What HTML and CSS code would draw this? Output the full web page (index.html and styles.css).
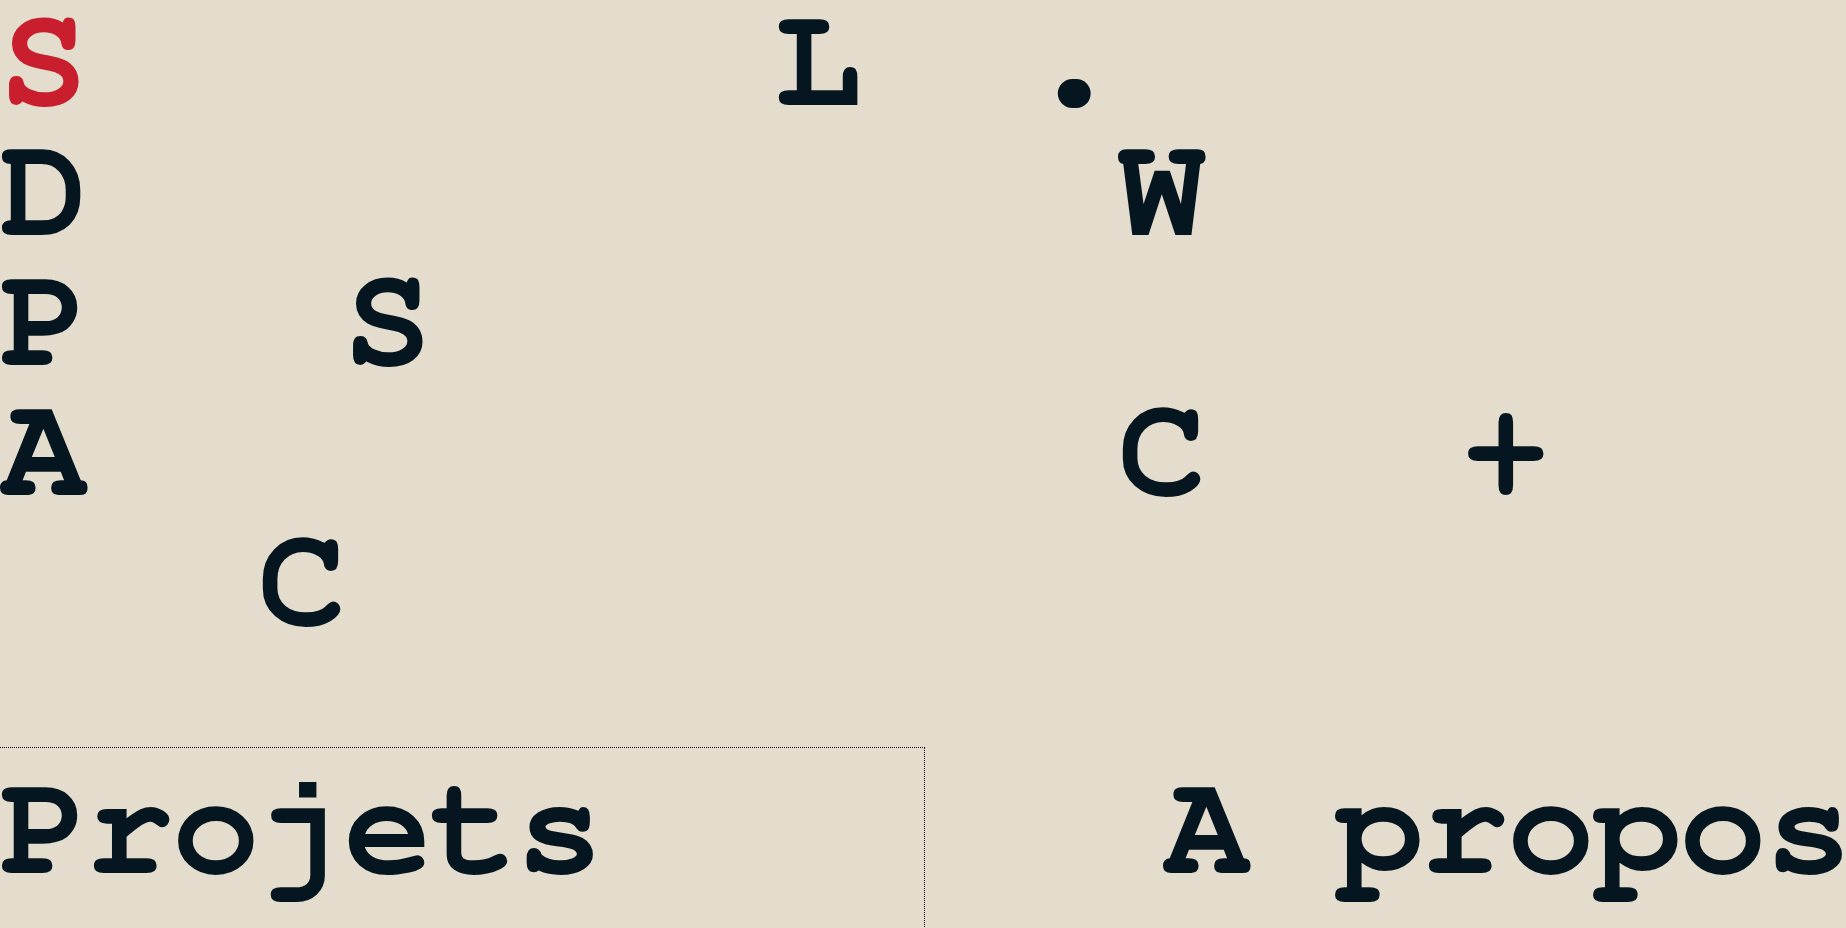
FILE: index.html
```html
<!DOCTYPE html>
<html lang="fr">
<head>
<meta charset="utf-8">
<title>S.L.D.</title>
<link rel="stylesheet" href="styles.css">
</head>
<body>
<main class="letters">
<div class="row"><span class="accent">S</span>        L  <span class="dot">.</span></div>
<div class="row">D            W</div>
<div class="row">P   S</div>
<div class="row">A            C   +</div>
<div class="row">   C</div>
</main>
<nav class="nav">
<a class="nav-link nav-link--focus" href="#projets">Projets</a>
<a class="nav-link nav-link--right" href="#apropos">A propos</a>
</nav>
</body>
</html>
```
FILE: styles.css
```css
html, body {
  margin: 0;
  padding: 0;
}
body {
  background: #e4ddcd;
  color: #061620;
  font-family: "FreeMono", "Courier New", monospace;
  font-weight: 700;
  font-size: 146px;
  letter-spacing: -1.6px;
  overflow: hidden;
  height: 928px;
}
.letters {
  display: flex;
  flex-direction: column;
  margin-top: -4px;
}
.row {
  white-space: pre;
  line-height: 130px;
  height: 130px;
}
.accent {
  color: #c81e2d;
}
.dot {
  display: inline-block;
  transform: scale(1.5);
  transform-origin: 50% 92px;
  position: relative;
  top: -9px;
  left: -2px;
}
.nav {
  display: grid;
  grid-template-columns: 924px 1fr;
  margin-top: 102px;
}
.nav-link {
  color: #061620;
  text-decoration: none;
  white-space: pre;
  line-height: normal;
  padding-top: 8px;
  padding-bottom: 40px;
}
.nav-link--focus {
  outline: 1px dotted #000;
}
.nav-link--right {
  text-align: right;
  margin-right: -5px;
}
```
